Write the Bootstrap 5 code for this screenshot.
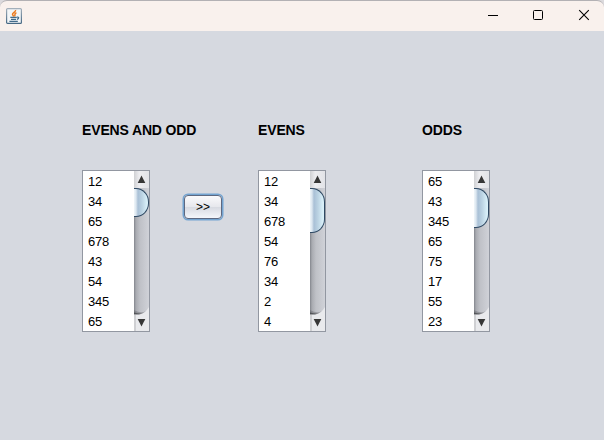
<!DOCTYPE html>
<html lang="en">
<head>
<meta charset="utf-8">
<title>Evens and odds</title>
<link href="https://cdn.jsdelivr.net/npm/bootstrap@5.3.0/dist/css/bootstrap.min.css" rel="stylesheet">
<style>
body{background:#d6d9e0;font-family:"Liberation Sans",Arial,sans-serif;color:#000;width:604px;height:440px;overflow:hidden}
.titlebar{height:31px;background:#f9f1ed;border-top:1px solid #b3b1b4;border-radius:7px 7px 0 0;padding-left:6px}
.frame-top{background:#dcdadd}
.caption-set{margin-right:-4px}
.caption-btn{width:46px;height:30px}
.stage{padding:90px 0 0 82px}
.col-all{width:101px}
.col-go{width:75px;padding:74px 0 0 1px}
.col-evens{width:164px}
.heading{font-size:14px;line-height:18px;font-weight:700;letter-spacing:-.15px;margin-bottom:31px;white-space:nowrap}
.jlist{width:68px;height:162px;border:1px solid #9297a1;background:#fff}
.jitems{width:51px;padding:1px 0 0 5px;font-size:13px;line-height:20px;letter-spacing:-.2px}
.jscroll{width:15px;background:linear-gradient(90deg,#83868d 0,#a9abb1 2px,#bfc1c7 6px,#d0d2d8 15px)}
.arrow{width:15px;height:17px;background:linear-gradient(90deg,#d0d1d4,#ededf0 35%,#e2e3e7)}
.arrow-down{width:15px;height:24px}
.track{overflow:hidden}
.thumb{width:15px;border:1.5px solid #2f4963;border-left:0;border-radius:0 13px 13px 0/0 14px 14px 0;background:linear-gradient(90deg,#f0f6fa 0,#dbe6ef 2px,#a9c0d6 4px,#bbd3e3 8px,#d9f0f9 13px)}
.thumb-short{height:29px}.thumb-tall{height:45px}.thumb-mid{height:40px}
.gobtn{width:38px;height:24px;padding:0;border:1px solid #5d6880;border-radius:4px;box-shadow:0 0 0 1.5px #73a4d1;background:linear-gradient(#fafafc,#e7e8ed 48%,#d8dbe2 52%,#f4f6fb);font-size:12px;line-height:21px;color:#000}
</style>
<script src="https://cdn.jsdelivr.net/npm/bootstrap@5.3.0/dist/js/bootstrap.bundle.min.js"></script>
</head>
<body>
<svg class="d-none">
<defs>
<symbol id="up" viewBox="0 0 15 17"><path d="M7.5 4.5L11.3 12H3.7z" fill="#373737"/></symbol>
<symbol id="down" viewBox="0 0 15 24"><path d="M0 3V8H9L12 4Q7 7 0 3z" fill="#55575b" opacity=".35"/><path d="M0 5.5V8H8L10 6.5Q5 7 0 5.5z" fill="#3f4145" opacity=".7"/><path d="M0 7.5H5Q11 7 15 0V24H0z" fill="#e9eaed"/><path d="M0 8h2v16H0z" fill="#cfd0d3"/><path d="M3.7 12h7.6L7.5 19.5z" fill="#373737"/></symbol>
</defs>
</svg>
<header class="frame-top">
<div class="titlebar d-flex align-items-center justify-content-between">
<svg width="16" height="16" viewBox="0 0 16 16" fill="none">
<defs><linearGradient id="ib" x2="0" y2="1"><stop stop-color="#a3afba"/><stop offset="1" stop-color="#456884"/></linearGradient></defs>
<rect x=".6" y=".6" width="14.8" height="14.8" rx="1" fill="#f3f6f8" stroke="url(#ib)" stroke-width="1.2"/>
<path d="M9.6 2C10 4 6.2 4.6 6.5 6.4c.1.8 1.2 1.2 1 2.2M10.4 4.8C7.6 5.8 9.8 6.7 8.5 8.4" stroke="#ec7a1e" stroke-width="1.5"/>
<path d="M4.3 9.4h6.5M5 11.4h5M3.4 13.3h8.4M11 9.1c2.5-.4 2 1.8-.1 2.3" stroke="#426b8b" stroke-width="1.2"/>
</svg>
<div class="caption-set d-flex">
<div class="caption-btn"><svg class="d-block" width="46" height="30"><path d="M18 14.5h10" stroke="#000"/></svg></div>
<div class="caption-btn"><svg class="d-block" width="46" height="30"><rect x="17.5" y="9.5" width="9" height="9" rx="1" fill="none" stroke="#000"/></svg></div>
<div class="caption-btn"><svg class="d-block" width="46" height="30"><path d="M17.2 9.2l9.6 9.6M26.8 9.2l-9.6 9.6" stroke="#000" stroke-width="1.1"/></svg></div>
</div>
</div>
</header>
<main class="stage d-flex align-items-start">
<section class="col-all">
<div class="heading">EVENS AND ODD</div>
<div class="jlist d-flex">
<div class="jitems overflow-hidden"><div>12</div><div>34</div><div>65</div><div>678</div><div>43</div><div>54</div><div>345</div><div>65</div></div>
<div class="jscroll d-flex flex-column">
<svg class="arrow flex-shrink-0"><use href="#up"/></svg>
<div class="track flex-grow-1"><div class="thumb thumb-short"></div></div>
<svg class="arrow-down flex-shrink-0"><use href="#down"/></svg>
</div>
</div>
</section>
<section class="col-go"><button class="gobtn d-block" type="button">&gt;&gt;</button></section>
<section class="col-evens">
<div class="heading">EVENS</div>
<div class="jlist d-flex">
<div class="jitems overflow-hidden"><div>12</div><div>34</div><div>678</div><div>54</div><div>76</div><div>34</div><div>2</div><div>4</div></div>
<div class="jscroll d-flex flex-column">
<svg class="arrow flex-shrink-0"><use href="#up"/></svg>
<div class="track flex-grow-1"><div class="thumb thumb-tall"></div></div>
<svg class="arrow-down flex-shrink-0"><use href="#down"/></svg>
</div>
</div>
</section>
<section>
<div class="heading">ODDS</div>
<div class="jlist d-flex">
<div class="jitems overflow-hidden"><div>65</div><div>43</div><div>345</div><div>65</div><div>75</div><div>17</div><div>55</div><div>23</div></div>
<div class="jscroll d-flex flex-column">
<svg class="arrow flex-shrink-0"><use href="#up"/></svg>
<div class="track flex-grow-1"><div class="thumb thumb-mid"></div></div>
<svg class="arrow-down flex-shrink-0"><use href="#down"/></svg>
</div>
</div>
</section>
</main>
</body>
</html>
